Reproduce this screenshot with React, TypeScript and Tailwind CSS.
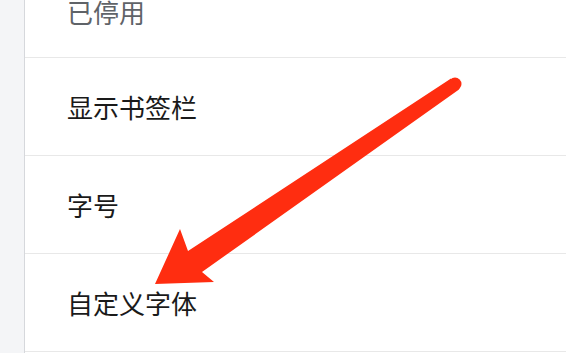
const rows = [
  { id: 1, label: "已停用", muted: true },
  { id: 2, label: "显示书签栏", muted: false },
  { id: 3, label: "字号", muted: false },
  { id: 4, label: "自定义字体", muted: false },
];

const Arrow = () => (
  <svg
    className="pointer-events-none absolute inset-0"
    width="566"
    height="353"
    viewBox="0 0 566 353"
  >
    <circle cx="455" cy="84" r="6.5" fill="#ff2d10" />
    <polygon
      points="451,78.5 188,251 180,229 155,284 214,282 202,272 459,89.5"
      fill="#ff2d10"
      strokeLinejoin="round"
    />
  </svg>
);

const App = () => {
  return (
    <div
      className="relative flex h-[353px] w-[566px] overflow-hidden bg-white"
      style={{ fontFamily: '"Noto Sans CJK SC", "Noto Sans", sans-serif' }}
    >
      {/* side strip */}
      <div className="w-[24px] shrink-0 bg-[#f4f5f7]"></div>

      {/* settings list */}
      <div className="flex-1 border-l border-[#d6d8dc] bg-white">
        <div className="-mt-[34px]">
          {rows.map((row, i) => (
            <div
              key={row.id}
              className={`flex items-center border-b border-[#e8e8e8] pl-[42px] ${
                i === 0 ? "h-[92px]" : "h-[98px]"
              }`}
            >
              <span
                className={`text-[26px] leading-none ${
                  row.muted ? "text-[#5f6368]" : "text-[#1a1a1a]"
                }`}
              >
                {row.label}
              </span>
            </div>
          ))}
        </div>
      </div>

      <Arrow />
    </div>
  );
};

export default App;
